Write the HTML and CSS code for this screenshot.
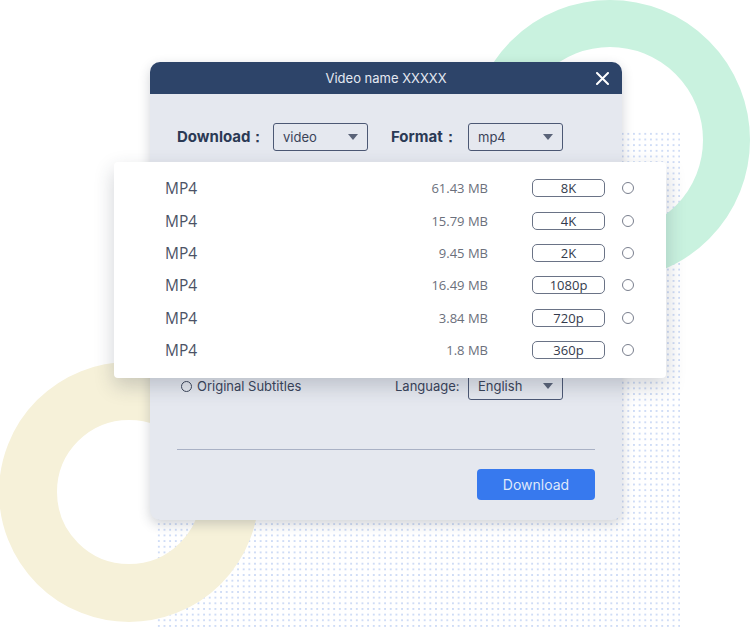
FILE: index.html
```html
<!DOCTYPE html>
<html>
<head>
<meta charset="utf-8">
<link rel="stylesheet" href="styles.css">
</head>
<body>
<div class="stage">
  <div class="dots"></div>
  <div class="ring ring-green"></div>
  <div class="ring ring-yellow"></div>

  <div class="dialog">
    <div class="titlebar">
      <span class="title">Video name XXXXX</span>
      <svg class="close" width="13" height="13" viewBox="0 0 13 13"><path d="M1 1L12 12M12 1L1 12" stroke="#ffffff" stroke-width="2" stroke-linecap="round"/></svg>
    </div>
    <div class="body">
      <div class="row">
        <span class="label label-dl">Download：</span>
        <div class="select"><span>video</span><i class="caret"></i></div>
        <span class="label label-fmt">Format：</span>
        <div class="select"><span>mp4</span><i class="caret"></i></div>
      </div>
      <div class="row row-sub">
        <div class="sub-left"><i class="radio radio-dark"></i><span>Original Subtitles</span></div>
        <span class="lang-label">Language:</span>
        <div class="select"><span>English</span><i class="caret"></i></div>
      </div>
      <div class="divider"></div>
      <div class="actions"><button class="btn">Download</button></div>
    </div>
  </div>

  <div class="popup">
    <div class="item"><span class="name">MP4</span><span class="size">61.43 MB</span><span class="badge">8K</span><i class="radio"></i></div>
    <div class="item"><span class="name">MP4</span><span class="size">15.79 MB</span><span class="badge">4K</span><i class="radio"></i></div>
    <div class="item"><span class="name">MP4</span><span class="size">9.45 MB</span><span class="badge">2K</span><i class="radio"></i></div>
    <div class="item"><span class="name">MP4</span><span class="size">16.49 MB</span><span class="badge">1080p</span><i class="radio"></i></div>
    <div class="item"><span class="name">MP4</span><span class="size">3.84 MB</span><span class="badge">720p</span><i class="radio"></i></div>
    <div class="item"><span class="name">MP4</span><span class="size">1.8 MB</span><span class="badge">360p</span><i class="radio"></i></div>
  </div>
</div>
</body>
</html>
```
FILE: styles.css
```css
* { box-sizing: border-box; }
html, body { margin: 0; padding: 0; background: #ffffff; }
body { font-family: "Inter", "Open Sans", sans-serif; }

.stage {
  position: relative;
  width: 750px;
  height: 630px;
  overflow: hidden;
  background: #ffffff;
}

.dots {
  position: absolute;
  left: 156px;
  top: 131px;
  width: 524px;
  height: 499px;
  background-image: radial-gradient(circle, #cfdcf6 0.9px, rgba(255,255,255,0) 1.3px);
  background-size: 5.67px 5.67px;
}

.ring {
  position: absolute;
  border-radius: 50%;
}
.ring-green {
  left: 470px;
  top: 0;
  width: 280px;
  height: 280px;
  border: 47px solid #c9f2df;
}
.ring-yellow {
  left: -1px;
  top: 362px;
  width: 260px;
  height: 260px;
  border: 58px solid #f6f1d9;
}

.dialog {
  position: absolute;
  left: 150px;
  top: 62px;
  width: 472px;
  height: 458px;
  background: #e5e8ef;
  border-radius: 10px;
  overflow: hidden;
  box-shadow: 0 4px 12px rgba(40, 50, 70, 0.22);
}

.titlebar {
  height: 32px;
  background: #2d4469;
  display: flex;
  align-items: center;
  justify-content: center;
  position: relative;
}
.title {
  color: #e4e9f2;
  font-size: 13px;
}
.close {
  position: absolute;
  right: 13px;
  top: 10px;
}

.body {
  padding: 29px 27px 20px 27px;
}

.row {
  display: flex;
  align-items: center;
  height: 28px;
}
.label {
  font-weight: 700;
  font-size: 15px;
  color: #2b3a55;
}
.label-dl { width: 96px; }
.label-fmt { width: 77px; margin-left: 23px; }

.select {
  width: 95px;
  height: 28px;
  border: 1px solid #4c5874;
  border-radius: 3px;
  display: flex;
  align-items: center;
  justify-content: space-between;
  padding: 0 9px 0 9px;
  font-size: 13px;
  color: #3a4358;
}
.caret {
  width: 0;
  height: 0;
  border-left: 5px solid transparent;
  border-right: 5px solid transparent;
  border-top: 6px solid #5a6378;
}

.row-sub {
  margin-top: 221px;
}
.sub-left {
  width: 218px;
  display: flex;
  align-items: center;
  padding-left: 4px;
  font-size: 13px;
  color: #39435a;
}
.sub-left span { margin-left: 5px; }
.lang-label {
  width: 73px;
  font-size: 13px;
  color: #39435a;
}

.radio {
  display: inline-block;
  width: 11px;
  height: 11px;
  border: 1.5px solid #6f7484;
  border-radius: 50%;
}
.radio-dark { border-color: #3b4459; }

.divider {
  margin-top: 49px;
  height: 1px;
  background: #a9b1c5;
}

.actions {
  display: flex;
  justify-content: flex-end;
  margin-top: 19px;
}
.btn {
  width: 118px;
  height: 31px;
  border: none;
  border-radius: 4px;
  background: #3779ee;
  color: #dfe8fb;
  font-family: "Inter", "Open Sans", sans-serif;
  font-size: 14px;
}

.popup {
  position: absolute;
  left: 114px;
  top: 162px;
  width: 552px;
  height: 216px;
  background: #ffffff;
  border-radius: 4px;
  box-shadow: 0 8px 20px rgba(40, 50, 70, 0.22);
  padding-top: 10px;
  padding-left: 51px;
  font-family: "Open Sans", "Liberation Sans", sans-serif;
}
.item {
  display: flex;
  align-items: center;
  height: 32.4px;
}
.name {
  width: 223px;
  font-size: 15.5px;
  color: #4b5265;
}
.size {
  width: 100px;
  text-align: right;
  font-size: 13px;
  color: #6b707c;
}
.badge {
  margin-left: 44px;
  width: 73px;
  height: 18px;
  border: 1px solid #6a7386;
  border-radius: 5px;
  text-align: center;
  font-size: 13px;
  line-height: 16px;
  color: #333a4c;
}
.item .radio {
  margin-left: 17px;
  width: 12px;
  height: 12px;
  border-color: #7a7f8e;
}
```
